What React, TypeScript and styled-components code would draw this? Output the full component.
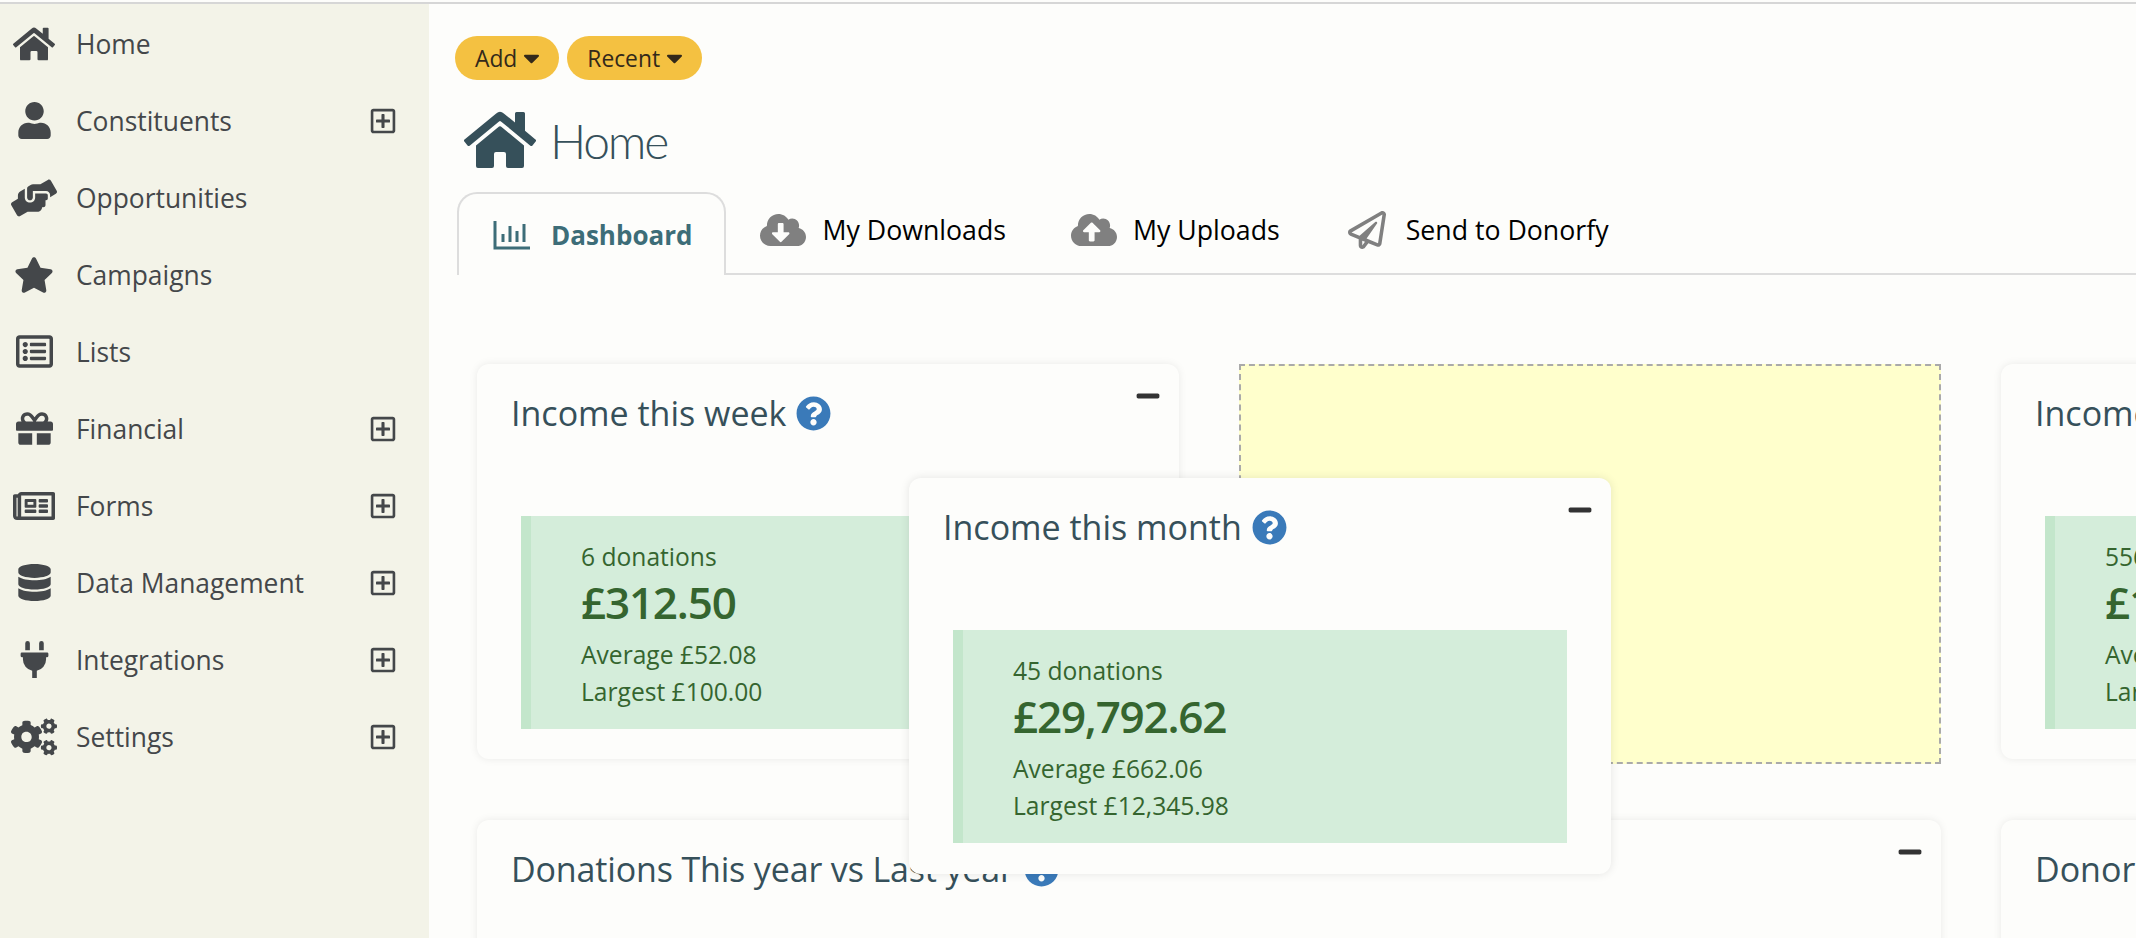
import React from "react";
import styled, { createGlobalStyle } from "styled-components";
import {
  FaCaretDown,
  FaCloudDownloadAlt,
  FaCloudUploadAlt,
  FaCogs,
  FaDatabase,
  FaGift,
  FaHandsHelping,
  FaHome,
  FaMinus,
  FaPlug,
  FaQuestionCircle,
  FaRegListAlt,
  FaRegNewspaper,
  FaRegPaperPlane,
  FaRegPlusSquare,
  FaStar,
  FaUser,
} from "react-icons/fa";

const GlobalStyle = createGlobalStyle`
  html, body {
    margin: 0;
    padding: 0;
    height: 100%;
    overflow: hidden;
    background: #fdfdfb;
  }
  body {
    font-family: "Open Sans", "Noto Sans", "Liberation Sans", sans-serif;
  }
`;

const menuItems = [
  { label: "Home", icon: <FaHome />, expands: false, size: 42 },
  { label: "Constituents", icon: <FaUser />, expands: true, size: 37 },
  { label: "Opportunities", icon: <FaHandsHelping />, expands: false, size: 46 },
  { label: "Campaigns", icon: <FaStar />, expands: false, size: 40 },
  { label: "Lists", icon: <FaRegListAlt />, expands: false, size: 37 },
  { label: "Financial", icon: <FaGift />, expands: true, size: 37 },
  { label: "Forms", icon: <FaRegNewspaper />, expands: true, size: 42 },
  { label: "Data Management", icon: <FaDatabase />, expands: true, size: 37 },
  { label: "Integrations", icon: <FaPlug />, expands: true, size: 37 },
  { label: "Settings", icon: <FaCogs />, expands: true, size: 46 },
];

const ChartIcon = () => (
  <svg width="38" height="30" viewBox="0 0 38 30" fill="none" stroke="currentColor">
    <path d="M2 1V28H37" strokeWidth="3" />
    <path d="M10 14V22M17 6V22M24 11V22M31 4V22" strokeWidth="3" />
  </svg>
);

const StatCard = ({
  title,
  count,
  total,
  average,
  largest,
}: {
  title: string;
  count: string;
  total: string;
  average: string;
  largest: string;
}) => (
  <>
    <CardHead>
      <CardTitle>{title}</CardTitle>
      <HelpIcon />
    </CardHead>
    <MinusButton />
    <Stat>
      <StatLine>{count}</StatLine>
      <StatTotal>{total}</StatTotal>
      <StatLine>{average}</StatLine>
      <StatLine>{largest}</StatLine>
    </Stat>
  </>
);

const App = () => {
  return (
    <Page>
      <GlobalStyle />
      <Sidebar>
        {menuItems.map((item) => (
          <MenuRow key={item.label}>
            <MenuIcon $size={item.size}>{item.icon}</MenuIcon>
            <MenuLabel>{item.label}</MenuLabel>
            {item.expands && <FaRegPlusSquare size={28} />}
          </MenuRow>
        ))}
      </Sidebar>
      <Main>
        <Actions>
          <Pill>
            Add <Caret />
          </Pill>
          <Pill>
            Recent <Caret />
          </Pill>
        </Actions>
        <Heading>
          <FaHome size={72} />
          <HeadingText>Home</HeadingText>
        </Heading>
        <Tabs>
          <ActiveTab>
            <ChartIcon />
            Dashboard
          </ActiveTab>
          <Tab>
            <FaCloudDownloadAlt size={46} color="#808080" />
            My Downloads
          </Tab>
          <Tab>
            <FaCloudUploadAlt size={46} color="#808080" />
            My Uploads
          </Tab>
          <Tab>
            <FaRegPaperPlane size={38} color="#808080" />
            Send to Donorfy
          </Tab>
        </Tabs>
        <Board>
          <Card>
            <StatCard
              title="Income this week"
              count="6 donations"
              total="£312.50"
              average="Average £52.08"
              largest="Largest £100.00"
            />
          </Card>
          <DropSlot />
          <Card>
            <StatCard
              title="Income this year"
              count="556 donations"
              total="£1"
              average="Average"
              largest="Largest"
            />
          </Card>
          <WideCard>
            <CardHead>
              <CardTitle>Donations This year vs Last year</CardTitle>
              <HelpIcon />
            </CardHead>
            <MinusButton />
          </WideCard>
          <TallCard>
            <CardHead>
              <CardTitle>Donors</CardTitle>
            </CardHead>
          </TallCard>
          <DraggedCard>
            <StatCard
              title="Income this month"
              count="45 donations"
              total="£29,792.62"
              average="Average £662.06"
              largest="Largest £12,345.98"
            />
          </DraggedCard>
        </Board>
      </Main>
    </Page>
  );
};

const Page = styled.div`
  display: flex;
  width: 2136px;
  height: 938px;
  padding-top: 2px;
  box-sizing: border-box;
  overflow: hidden;
  background: #fdfdfb;

  &::before {
    content: "";
    position: absolute;
    top: 2px;
    left: 0;
    width: 100%;
    height: 2px;
    background: #d6d6d6;
    z-index: 5;
  }
`;

const Sidebar = styled.nav`
  flex: 0 0 429px;
  box-sizing: border-box;
  padding-top: 3px;
  background: #f3f3e8;
  color: #44474a;
`;

const MenuRow = styled.div`
  display: flex;
  align-items: center;
  height: 77px;
  padding-right: 32px;
`;

const MenuIcon = styled.span<{ $size: number }>`
  flex: 0 0 68px;
  margin-right: 8px;
  display: flex;
  justify-content: center;

  svg {
    width: ${(p) => p.$size}px;
    height: ${(p) => p.$size}px;
  }
`;

const MenuLabel = styled.span`
  flex: 1;
  font-size: 26.4px;
`;

const Main = styled.main`
  flex: 1;
  min-width: 0;
  position: relative;
`;

const Actions = styled.div`
  display: flex;
  gap: 8px;
  padding: 34px 0 0 26px;
`;

const Pill = styled.button`
  display: flex;
  align-items: center;
  gap: 6px;
  height: 44px;
  padding: 0 19px 0 20px;
  border: 0;
  border-radius: 22px;
  background: #f4c141;
  color: #33291a;
  font: inherit;
  font-size: 22.8px;
`;

const Caret = styled(FaCaretDown)`
  width: 17px;
  height: 26px;
`;

const Heading = styled.div`
  display: flex;
  align-items: center;
  gap: 14px;
  height: 72px;
  margin-top: 24px;
  padding-left: 35px;
  color: #36505a;
`;

const HeadingText = styled.h1`
  margin: 0;
  font-family: "Lato", "Open Sans", sans-serif;
  font-size: 48px;
  font-weight: 300;
  letter-spacing: -2.2px;
`;

const Tabs = styled.div`
  display: flex;
  align-items: flex-end;
  height: 81px;
  margin: 16px 0 0 28px;
  border-bottom: 2px solid #dddddd;
  font-size: 26.7px;
  color: #000000;
`;

const Tab = styled.div`
  display: flex;
  align-items: center;
  gap: 16px;
  height: 81px;
  padding: 0 0 6px 34px;
  margin-right: 31px;
  box-sizing: border-box;

  &:last-child {
    padding-left: 37px;
    gap: 20px;
  }
`;

const ActiveTab = styled(Tab)`
  height: 83px;
  margin: 0 0 -2px;
  padding: 1px 32px 0 34px;
  gap: 20px;
  border: 2px solid #dddddd;
  border-bottom: 0;
  border-radius: 20px 20px 0 0;
  background: #fdfdfb;
  color: #3d6d78;
  font-size: 26px;
  font-weight: 700;
`;

const Board = styled.div`
  position: relative;
  display: grid;
  grid-template-columns: 702px 702px 702px;
  grid-template-rows: 400px 400px;
  gap: 56px 60px;
  padding: 89px 0 0 48px;
`;

const Card = styled.section`
  position: relative;
  align-self: start;
  box-sizing: border-box;
  height: 395px;
  padding: 0 44px;
  background: #fdfdfb;
  border-radius: 12px;
  box-shadow: 0 0 8px rgba(0, 0, 0, 0.08);
`;

const WideCard = styled(Card)`
  grid-column: span 2;
  height: 400px;

  h2 {
    letter-spacing: -0.15px;
  }
`;

const TallCard = styled(Card)`
  height: 400px;
`;

const DraggedCard = styled(Card)`
  position: absolute;
  left: 480px;
  top: 203px;
  width: 702px;
  height: 396px;
  z-index: 3;
  box-shadow: 0 0 10px rgba(0, 0, 0, 0.1);
`;

const DropSlot = styled.div`
  background: #ffffcc;
  border: 2px dashed #aaaaaa;
  box-sizing: border-box;
`;

const CardHead = styled.div`
  display: flex;
  align-items: center;
  gap: 10px;
  height: 116px;
  margin-left: -10px;
  box-sizing: border-box;
  padding-bottom: 18px;
  color: #36505a;
`;

const CardTitle = styled.h2`
  margin: 0;
  font-size: 34px;
  font-weight: 400;
  white-space: nowrap;
`;

const HelpIcon = styled(FaQuestionCircle)`
  flex: none;
  width: 35px;
  height: 35px;
  color: #3a7ab9;
`;

const MinusButton = styled(FaMinus)`
  position: absolute;
  top: 19px;
  right: 18px;
  width: 26px;
  height: 26px;
  color: #333333;
`;

const Stat = styled.div`
  box-sizing: border-box;
  height: 213px;
  margin-top: 36px;
  padding: 22px 0 0 50px;
  background: #d4edda;
  border-left: 10px solid #c3e6cb;
  color: #35652f;
  white-space: nowrap;
  overflow: hidden;
`;

const StatLine = styled.div`
  font-size: 24.6px;
  line-height: 37px;
`;

const StatTotal = styled.div`
  font-size: 44px;
  font-weight: 600;
  line-height: 54px;
  letter-spacing: -1.2px;
  margin-bottom: 7px;
`;

export default App;
